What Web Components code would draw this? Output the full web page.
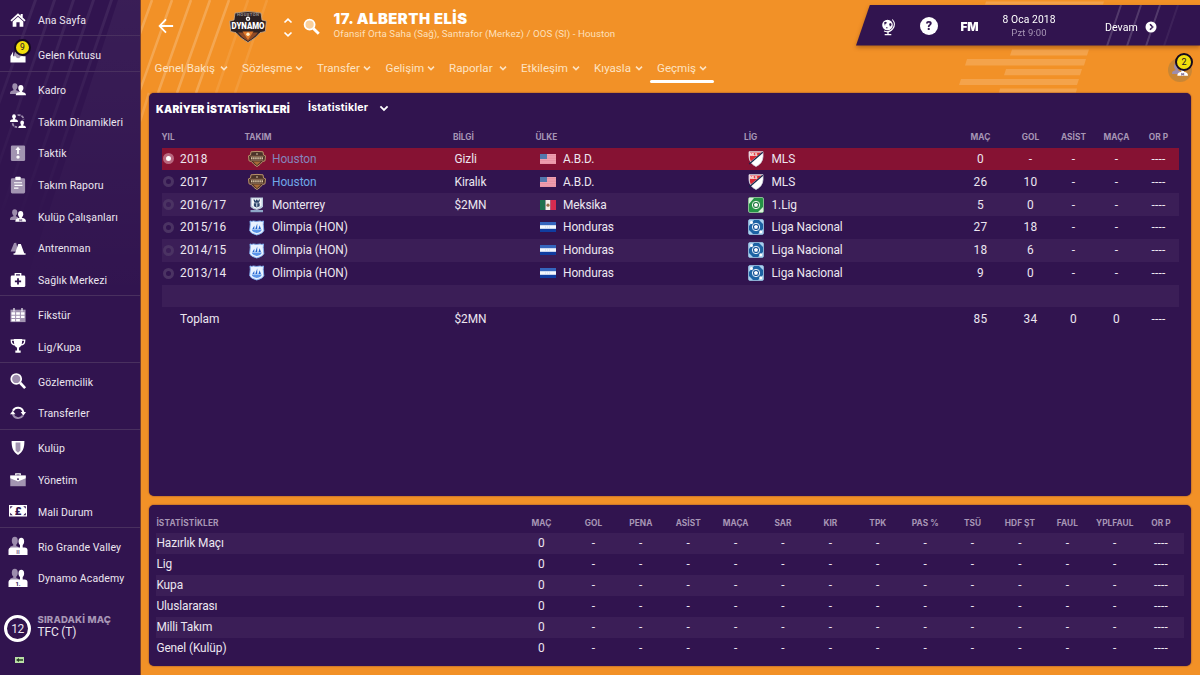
<!DOCTYPE html>
<html lang="tr">
<head>
<meta charset="utf-8">
<title>Alberth Elis - Kariyer İstatistikleri</title>
<style>
    html, body { margin: 0; padding: 0; width: 1200px; height: 675px; overflow: hidden; }
    body {
        --purple: #31144f;
        --stripe: #3b1e57;
        --orange: #f29127;
        --text: #ece6f0;
        --dim: #a796b5;
        font-family: Roboto, "Liberation Sans", sans-serif;
        font-size: 12px;
        color: var(--text);
    }
</style>
</head>
<body>
<fm-app>
    <fm-sidebar slot="sidebar"></fm-sidebar>
    <fm-player-header slot="header"></fm-player-header>
    <fm-panel slot="career" class="career"><career-table></career-table></fm-panel>
    <fm-panel slot="stats" class="stats"><stats-table></stats-table></fm-panel>
</fm-app>

<script>
// every icon is [viewBox width, viewBox height, markup]
const ICONS = {
    home: [18, 18, '<path d="M.5 9.200 9 1.300l3 2.800V2.200h2.300v4l3.200 3-1.300 1.400L9 4.200l-7.200 6.400z" fill="#fff"/><path d="M3 10.600 9 5.300l6 5.300v6h-4.200v-5H7.200v5H3z" fill="#fff"/>'],
    inbox: [18, 18, '<path d="M4 10 7 2h6l2 9-2 3H4z" fill="#a99cb6"/><path d="M1 9.500 3.500 5v5.500h3c.4 3 5 3 5.400 0H17.500V17.500H.5V10z" fill="#fff"/>'],
    people: [18, 18, '<g fill="#9d8dad"><ellipse cx="5.500" cy="5" rx="2.900" ry="3.500"/><path d="M0 13.500c0-2.800 1.200-3.600 3.900-4.100V7h3v2.400L10 10.500v3z"/></g><g fill="#fff"><ellipse cx="12.200" cy="6.800" rx="2.900" ry="3.500"/><path d="M6.500 15c0-2.500 1.300-3.200 4.200-3.700V9h3v2.300c2.900.5 4.300 1.200 4.300 3.700z"/></g>'],
    dynamics: [18, 18, '<g fill="#fff"><ellipse cx="4.500" cy="4" rx="2.100" ry="2.600"/><path d="M0 10c0-2.200 1-2.500 3.400-3V5h2.200v2c2.400.5 3.400.8 3.400 3z"/><ellipse cx="13.700" cy="11" rx="2.100" ry="2.600"/><path d="M9.300 17c0-2.200 1-2.500 3.300-3v-2h2.200v2c2.300.5 3.200.8 3.200 3z"/></g><path d="M8.500 2.500c3.800-.8 6.700 1.300 6.700 4.800M3 11.500c.2 2.700 2 4.300 5 4.300" fill="none" stroke="#9d8dad" stroke-width="2" stroke-dasharray="3.400 1"/>'],
    tactic: [18, 18, '<rect x="1" y=".5" width="16" height="17.500" rx="1.500" fill="#a294b1"/><path d="m9 2 3 3.500h-2V10H8V5.500H6z" fill="#fff"/><circle cx="9" cy="13.600" r="1.900" fill="#fff"/>'],
    report: [18, 18, '<rect x="1" y="1.500" width="16" height="17" rx="1.500" fill="#a294b1"/><rect x="6" y="-.2" width="6" height="3.600" rx=".8" fill="#fff"/><path d="M4.500 6.500h9M5 9.500h9M4.500 12.500h5" stroke="#fff" stroke-width="1.300"/>'],
    staff: [18, 18, '<g fill="#9d8dad"><ellipse cx="5.300" cy="5" rx="2.900" ry="3.500"/><path d="M0 13.500c0-2.700 1.200-3.600 3.900-4.100V7h2.800v2.300L9 10.500v3z"/></g><g fill="#fff"><ellipse cx="12" cy="7" rx="2.900" ry="3.500"/><path d="M6 15.500c0-2.900 1.500-3.900 4.600-4.400V9h2.800v2.100c3.100.5 4.600 1.500 4.600 4.400z"/></g><path d="m10.300 12 1.700 1 1.700-1v3.500l-1.700-1-1.700 1z" fill="#8c7a9f"/>'],
    training: [18, 18, '<path d="M.7 13 4.600 3.500l2.400-.5 2 10z" fill="#9d8dad"/><path d="M4 16.500V15h1.700L9.300 4.500h2.900L16 15h1.500v1.500z" fill="#fff"/>'],
    medical: [18, 18, '<path d="M6 4.500V1.800h6v2.700" fill="none" stroke="#fff" stroke-width="1.600"/><rect x=".8" y="4" width="16.400" height="13" rx="1.500" fill="#fff"/><path d="M9 7v7M5.500 10.500h7" stroke="#31144f" stroke-width="2"/>'],
    calendar: [18, 18, '<path d="M.5 3h17v14H.5z" fill="#a294b1"/><path d="M1.700 6h4v2.800h-4zm5.200 0h4.200v2.800H6.900zm5.400 0h4v2.800h-4zM1.700 9.800h4v2.700h-4zm5.200 0h4.200v2.700H6.900zm5.400 0h4v2.700h-4zM1.700 13.500h4V16h-4zm5.200 0h4.200V16H6.900z" fill="#fff"/><path d="M4.500 1v4M13.500 1v4" stroke="#fff" stroke-width="1.300"/>'],
    trophy: [18, 18, '<path d="M4.300 1h9.400c0 5.500-.8 8.700-3.600 9.700v3.300H12v2.700H6V14h1.900v-3.300C5.100 9.700 4.300 6.500 4.300 1z" fill="#fff"/><path d="M4.800 2.500H1.400c0 3.400 1.500 5.300 4.600 5.300M13.200 2.500h3.400c0 3.400-1.500 5.300-4.600 5.300" fill="none" stroke="#fff" stroke-width="1.400"/>'],
    search: [18, 18, '<circle cx="7" cy="6.700" r="5.600" fill="#9d8dad" stroke="#fff" stroke-width="1.900"/><path d="m11.300 11 5.700 6" stroke="#fff" stroke-width="3"/>'],
    transfer: [18, 18, '<path d="M3.300 6.500A6.300 6.300 0 0 1 15 8" fill="none" stroke="#fff" stroke-width="2.200"/><path d="m12 7.800 6 0-3 4.200z" fill="#fff"/><path d="M14.500 12A6.300 6.300 0 0 1 3.200 10" fill="none" stroke="#9d8dad" stroke-width="2.200"/><path d="M0 10.500 6.200 10.500 3.100 6.500z" fill="#fff"/>'],
    shield: [18, 18, '<path d="M1.800 1h14.400c0 8-1.700 12-7.200 15.800C3.500 13 1.800 9 1.800 1z" fill="#fff"/><path d="M6.300 2.700h5.400v9.200L9 14.300l-2.700-2.400z" fill="#a294b1"/>'],
    briefcase: [18, 18, '<path d="M6.500 4V2h5v2" fill="none" stroke="#fff" stroke-width="1.400"/><path d="M.3 4h17.400v12H.3z" fill="#a294b1"/><path d="M.3 4h17.400v3L9 10.700.3 7z" fill="#fff"/><circle cx="9" cy="8" r="1.100" fill="#31144f"/>'],
    money: [18, 18, '<rect x="0" y="3" width="18" height="11.500" fill="#fff"/><path d="M1.200 4.200h2.500L1.200 6.700zM16.800 4.200h-2.500l2.500 2.500zM1.200 13.300h2.500l-2.500-2.500zM16.800 13.300h-2.500l2.500-2.500z" fill="#31144f"/><text x="9" y="12.700" font-size="11" font-weight="900" text-anchor="middle" fill="#31144f">£</text>'],
    teamB: [20, 20, '<g fill="#9d8dad"><ellipse cx="6.800" cy="4.700" rx="3" ry="3.900"/><path d="M1.500 14c0-3.400 1.500-3.900 3.800-4.400V7h3v3l2.300 1v3z"/></g><g fill="#fff"><ellipse cx="13.300" cy="5.500" rx="2.800" ry="3.700"/><path d="M12 8h2.700v4H12z"/><path d="M.5 19v-4.500c0-2 1-2.900 3-2.900h13c2 0 3 .9 3 2.900V19z"/></g><text x="10" y="17.800" font-size="6" font-weight="700" text-anchor="middle" fill="#7a678d">II</text>'],
    teamC: [20, 20, '<g fill="#9d8dad"><ellipse cx="6.800" cy="4.700" rx="3" ry="3.900"/><path d="M1.500 14c0-3.400 1.500-3.900 3.800-4.400V7h3v3l2.300 1v3z"/></g><g fill="#fff"><ellipse cx="13.300" cy="5.500" rx="2.800" ry="3.700"/><path d="M12 8h2.700v4H12z"/><path d="M.5 19v-4.500c0-2 1-2.900 3-2.900h13c2 0 3 .9 3 2.900V19z"/></g><text x="10" y="17.800" font-size="6" font-weight="700" text-anchor="middle" fill="#31144f">1.</text>'],
    back: [18, 18, '<path d="M9 1.500 1.800 9 9 16.500M2 9h15" fill="none" stroke="#fff" stroke-width="2"/>'],
    chevron: [10, 10, '<path d="m2 3.600 3 3 3-3" fill="none" stroke="currentColor" stroke-width="1.500"/>'],
    chevronUp: [10, 10, '<path d="m1.500 6.500 3.500-3.300 3.500 3.300" fill="none" stroke="currentColor" stroke-width="1.700"/>'],
    lens: [18, 18, '<circle cx="7" cy="7" r="5.300" fill="#f9cf9b" stroke="#fff" stroke-width="1.900"/><path d="m11 11 5.700 5.700" stroke="#fff" stroke-width="3"/>'],
    globe: [16, 18, '<circle cx="7.500" cy="7" r="5.300" fill="#fff"/><path d="M12.300 1.500a7.300 7.300 0 0 1-8.300 11.600" fill="none" stroke="#fff" stroke-width="1.100"/><path d="M8 13.500v2.800M4.700 16.700h6.600" stroke="#fff" stroke-width="1.300"/><path d="m4 4.500 2-.8 1 1.200-1.700 1.200-.3 2zM9 5.800l2-.8.6 2-1.600 1.800zM6 9l1.600.3L7 11z" fill="#31144f"/>'],
    help: [18, 18, '<circle cx="9" cy="9" r="9" fill="#fff"/><text x="9" y="13.400" font-size="12.500" font-weight="900" text-anchor="middle" fill="#31144f">?</text>'],
    go: [12, 12, '<circle cx="6" cy="6" r="5.500" fill="#fff"/><path d="m5 3.200 2.700 2.800L5 8.800" fill="none" stroke="#31144f" stroke-width="1.600"/>'],
    houston: [38, 32, '<path d="M6 2Q19-1 32 2l1 7 4.300 1-1 10.500-5.300 1.200Q27 27 19 31.500 11 27 7 21.700L1.700 20.500.7 10 5 9z" fill="#2d2122" stroke="#c9ab8c" stroke-width=".8"/><path d="M9 21.500h20q-3.500 5-10 8.700Q12.500 26.500 9 21.500z" fill="#8f4a25"/><path d="M13.500 20.500h11L19 29z" fill="#e07a2c"/><circle cx="19" cy="23.300" r="1.700" fill="#fff0c8"/><circle cx="19" cy="7.800" r="2.200" fill="#fff"/><circle cx="19" cy="7.800" r=".9" fill="#2d2122"/><text x="19" y="5.300" font-size="4.200" font-weight="700" text-anchor="middle" textLength="22" fill="#9a8f8e">HOUSTON</text><text x="19" y="18.300" font-size="8.500" font-weight="900" text-anchor="middle" textLength="33" lengthAdjust="spacingAndGlyphs" fill="#fff">DYNAMO</text>'],
    houstonSmall: [18, 16, '<path d="M3 .8q6-.8 12 0l.5 3.200 2 .8-.5 5-2.500.8q-2 2.900-5.500 5-3.500-2.100-5.500-5l-2.500-.8-.5-5 2-.8z" fill="#4a3228" stroke="#b8926a" stroke-width="1"/><path d="M5 10.500h8L9 14.300z" fill="#a86b38"/><path d="M2.500 5.300h13M2.800 9.200h12.400" stroke="#a88764" stroke-width=".8"/><path d="M3 7.300h12" stroke="#d8c4a4" stroke-width="2" stroke-dasharray="1.500 .6"/><circle cx="9" cy="3" r="1" fill="#a8957c"/>'],
    monterrey: [14, 16, '<path d="M.5.500h13v9q-1 2.500-6.500 4-5.500-1.500-6.500-4z" fill="#b9c9dc"/><path d="M2 1.500h10v7Q11 11 7 12.300 3 11 2 8.500z" fill="#f5f8fa"/><path d="M3.500 2.500h1.300l.8 2 .9-2h1l.9 2 .8-2h1.300L9.300 6H4.700zM4 6.500h6v3.200L7 11 4 9.700z" fill="#2a4268"/><path d="M6.400 6.500h1.200v3.700H6.400z" fill="#cdd9e6"/><path d="M.5 13.500h13v2.300H.5z" fill="#8ea7c7"/>'],
    olimpia: [16, 16, '<path d="M1 1q2 1 3.500 0 3.500 1 7 0Q13 2 15 1l-.3 3.500.6 6.500q-1 3-7.300 4.500Q1.700 14 .7 11l.6-6.500z" fill="#e9f2ff" stroke="#7fb0f2" stroke-width=".9"/><path d="M2.800 9.700h10.400q-.5 2.800-5.200 3.600-4.700-.8-5.200-3.600z" fill="#5b95ea"/><path d="M3.500 9.300 5.500 6v3.300zM6.500 9.300 8.500 3.500v5.800zM9.700 9.300 11 5.500l1.300 3.800z" fill="#2364cd"/>'],
    usa: [16, 10, '<path d="M0 0h16v10H0z" fill="#ef9fb0"/><path d="M0 1.700h16M0 4.200h16M0 6.700h16M0 9.200h16" stroke="#e48a9d" stroke-width=".8"/><path d="M0 0h7v5H0z" fill="#5377ac"/>'],
    mexico: [16, 10, '<path d="M0 0h5.500v10H0z" fill="#1d7350"/><path d="M5.500 0h5v10h-5z" fill="#f3efe9"/><path d="M10.500 0H16v10h-5.500z" fill="#d62b50"/><circle cx="8" cy="5.200" r="1.600" fill="#967147"/>'],
    honduras: [16, 10, '<path d="M0 0h16v10H0z" fill="#f4f7fd"/><path d="M0 0h16v3.200H0z" fill="#3565bd"/><path d="M0 6.800h16V10H0z" fill="#103da0"/><path d="M5 5h6" stroke="#c3d3ee" stroke-width=".8" stroke-dasharray="1 1"/>'],
    mls: [16, 16, '<path d="M1 .7h14v5q-.4 6.700-7 9.800Q1.400 12.400 1 5.700z" fill="#fff" stroke="#d9dce4" stroke-width=".8"/><path d="M1.800 1.500h12L2.700 10.500q-.9-2.500-.9-4.800z" fill="#d92a36"/><path d="m1.200 13 13.600-11.700" stroke="#17254a" stroke-width="1.300"/><text x="5.600" y="5.300" font-size="3.800" font-weight="900" text-anchor="middle" fill="#fff">MLS</text>'],
    ligMx: [16, 16, '<rect x=".5" y=".5" width="15" height="15" rx="1.500" fill="#249345" stroke="#9fd2a4" stroke-width=".8"/><path d="M1 1h5L1 7zM15 15h-5l5-5z" fill="#dcefdc"/><circle cx="8" cy="8" r="3.700" fill="#237d45" stroke="#e8f6e8" stroke-width="1"/><path d="m8 5.800 2 1.500-.7 2.400H6.700L6 7.300z" fill="#fff"/>'],
    ligHn: [16, 16, '<rect x=".5" y=".5" width="15" height="15" rx="1.500" fill="#1d63a4" stroke="#a6cbe8" stroke-width=".8"/><path d="M1 1h5L1 7zM15 15h-5l5-5zM11 1l4 4V1zM1 11l4 4H1z" fill="#a9cfee"/><circle cx="3.500" cy="3.500" r="1.500" fill="#fff"/><circle cx="12.700" cy="12.700" r="1.500" fill="#fff"/><circle cx="8" cy="8" r="3.700" fill="#1c5598" stroke="#e2f0fb" stroke-width="1"/><path d="m8 5.800 2 1.500-.7 2.400H6.700L6 7.300z" fill="#fff"/>']
};

class FmIcon extends HTMLElement {
    constructor() {
        super();
        this.attachShadow({ mode: 'open' });
    }

    connectedCallback() {
        const [w, h, body] = ICONS[this.getAttribute('name')];
        const width = this.getAttribute('width') || w;
        this.shadowRoot.innerHTML = `
            <style>
                :host { display: block; flex: none; width: ${width}px; height: ${width * h / w}px; }
                svg { display: block; width: 100%; height: 100%; overflow: visible; }
                text { font-family: Roboto, sans-serif; letter-spacing: 0; }
            </style>
            <svg viewBox="0 0 ${w} ${h}">${body}</svg>
        `;
    }
}


class FmApp extends HTMLElement {
    constructor() {
        super();
        this.attachShadow({ mode: 'open' });
        this.shadowRoot.innerHTML = `
            <style>
                :host { display: grid; grid-template-columns: 141px 1fr; width: 1200px; height: 675px; background: var(--orange); }
                main { display: flex; flex-direction: column; padding: 0 9px 0 8px; position: relative; box-sizing: border-box; height: 675px; }
                .lines { position: absolute; left: 0; top: 0; width: 1059px; height: 100%; }
                ::slotted(*) { position: relative; }
                ::slotted(.career) { height: 402.500px; margin-bottom: 9px; }
                ::slotted(.stats) { height: 161.500px; }
            </style>
            <slot name="sidebar"></slot>
            <main>
                <svg class="lines" viewBox="0 0 1059 675">
                    <g stroke="#fff" stroke-width="2.500" opacity=".2">
                        <path d="M11 0-4 42M31 0-2 93M50 0 17 93M69 0 36 93M88 0 55 93"/>
                        <path d="M107 0 75 93M126 0 94 93" opacity=".45"/>
                        <path d="M8 93-10 150" opacity=".7"/>
                    </g>
                    <g fill="#fff" opacity=".17">
                        <path d="M845 1.500h118l-1 3H844zM871 49.500h77l-2 6H869zM826 59h119l-2 6.500H824zM865 69h76l-2 6.200H863zM820 79h118l-2 6H818zM859 88.500h77l-1 4H858z"/>
                    </g>
                </svg>
                <slot name="header"></slot>
                <slot name="career"></slot>
                <slot name="stats"></slot>
            </main>
        `;
    }
}


class FmNavItem extends HTMLElement {
    constructor() {
        super();
        this.attachShadow({ mode: 'open' });
    }

    connectedCallback() {
        const badge = this.getAttribute('badge');
        const icon = this.getAttribute('icon');
        this.shadowRoot.innerHTML = `
            <style>
                :host { display: grid; grid-template-columns: 35px 1fr; column-gap: 3px; align-items: center; height: 31.650px; position: relative; }
                .icon { display: flex; justify-content: center; }
                .label { font-size: 10.500px; letter-spacing: .1px; white-space: nowrap; margin-top: 1.500px; }
                .badge { position: absolute; left: 14px; top: .5px; width: 13px; height: 13px; border: 2px solid #15091f; border-radius: 50%; background: #f2de0c; color: #241327; font-size: 8.500px; line-height: 13px; text-align: center; }
            </style>
            <span class="icon"><fm-icon name="${icon}" width="${icon.startsWith('team') ? 20 : icon === 'money' ? 18 : 16}"></fm-icon></span>
            <span class="label"><slot></slot></span>
            ${badge ? `<span class="badge">${badge}</span>` : ''}
        `;
    }
}


class FmSidebar extends HTMLElement {
    constructor() {
        super();
        this.attachShadow({ mode: 'open' });
        this.shadowRoot.innerHTML = `
            <style>
                :host { display: block; position: relative; height: 675px; background: var(--purple); box-sizing: border-box; border-right: 1px solid #77402f; overflow: hidden; }
                .lines { position: absolute; left: 0; top: 0; width: 140px; height: 300px; }
                nav { position: relative; }
                .group { padding-top: 2.450px; border-top: 1px solid #49305f; }
                .group:first-child { padding-top: 3.800px; border-top: 0; }
                .next { position: relative; display: grid; grid-template-columns: 27px 1fr; column-gap: 6.500px; align-items: center; padding: 0 0 0 4px; margin-top: 20.500px; height: 28px; }
                .ring { width: 21px; height: 21px; border: 3px solid #fff; border-radius: 50%; line-height: 22px; text-align: center; font-size: 12px; letter-spacing: -.4px; }
                .next b { display: block; font: 800 9.600px/13px Inter, sans-serif; color: var(--dim); letter-spacing: .15px; margin-top: -4px; }
                .next span { display: block; font-size: 12px; line-height: 13px; letter-spacing: -.2px; }
                .sub { display: block; position: relative; margin: 15px 0 0 15px; width: 9px; height: 6px; }
            </style>
            <svg class="lines" viewBox="0 0 140 300">
                <defs><linearGradient id="fade" x2="0" y2="1"><stop offset="0" stop-color="#fff" stop-opacity=".07"/><stop offset="1" stop-color="#fff" stop-opacity="0"/></linearGradient></defs>
                <path d="M118 0h22v300H20z" fill="url(#fade)" opacity=".6"/>
                <path d="M34 0h3L-2 110v-8zM53 0h3L0 165v-8zM72 0h3L4 210H1zM92 0h3L20 220h-3zM110 0h3L36 226h-3z" fill="url(#fade)"/>
            </svg>
            <nav>
                <div class="group"><fm-nav-item icon="home">Ana Sayfa</fm-nav-item></div>
                <div class="group"><fm-nav-item icon="inbox" badge="9">Gelen Kutusu</fm-nav-item></div>
                <div class="group">
                    <fm-nav-item icon="people">Kadro</fm-nav-item>
                    <fm-nav-item icon="dynamics">Takım Dinamikleri</fm-nav-item>
                    <fm-nav-item icon="tactic">Taktik</fm-nav-item>
                    <fm-nav-item icon="report">Takım Raporu</fm-nav-item>
                    <fm-nav-item icon="staff">Kulüp Çalışanları</fm-nav-item>
                    <fm-nav-item icon="training">Antrenman</fm-nav-item>
                    <fm-nav-item icon="medical">Sağlık Merkezi</fm-nav-item>
                </div>
                <div class="group">
                    <fm-nav-item icon="calendar">Fikstür</fm-nav-item>
                    <fm-nav-item icon="trophy">Lig/Kupa</fm-nav-item>
                </div>
                <div class="group">
                    <fm-nav-item icon="search">Gözlemcilik</fm-nav-item>
                    <fm-nav-item icon="transfer">Transferler</fm-nav-item>
                </div>
                <div class="group">
                    <fm-nav-item icon="shield">Kulüp</fm-nav-item>
                    <fm-nav-item icon="briefcase">Yönetim</fm-nav-item>
                    <fm-nav-item icon="money">Mali Durum</fm-nav-item>
                </div>
                <div class="group">
                    <fm-nav-item icon="teamB">Rio Grande Valley</fm-nav-item>
                    <fm-nav-item icon="teamC">Dynamo Academy</fm-nav-item>
                </div>
            </nav>
            <div class="next">
                <div class="ring">12</div>
                <div><b>SIRADAKİ MAÇ</b><span>TFC (T)</span></div>
            </div>
            <svg class="sub" viewBox="0 0 9 6"><path d="M0 0h9v6H0z" fill="#b9dfa5"/><path d="M1 3 4 1v1.300h4v1.400H4V5z" fill="#243c22"/></svg>
        `;
    }
}


class FmPlayerHeader extends HTMLElement {
    constructor() {
        super();
        this.attachShadow({ mode: 'open' });

        // label and distance to the start of the next tab
        const tabs = [
            ['Genel Bakış', 87.5], ['Sözleşme', 75], ['Transfer', 68.5], ['Gelişim', 63.5],
            ['Raporlar', 72], ['Etkileşim', 73], ['Kıyasla', 63], ['Geçmiş', 64]
        ];

        this.shadowRoot.innerHTML = `
            <style>
                :host { display: block; height: 93px; color: #fff; }
                .top { display: flex; height: 52px; align-items: center; box-sizing: border-box; padding-left: 9px; }
                .crest { margin: 2px 0 0 54.500px; }
                .steps { display: flex; flex-direction: column; gap: 3px; margin: 2px 0 0 16.500px; }
                .lens { margin: 0 0 0 9.500px; }
                .name { margin: 0 0 0 14px; white-space: nowrap; }
                h1 { margin: 0; font: 900 14.800px/16px Inter, sans-serif; letter-spacing: .5px; }
                p { margin: 0; font-size: 9.700px; line-height: 14px; letter-spacing: .08px; color: #fde0bd; }
                .tabs { display: flex; height: 31px; padding-left: 5.500px; }
                .tab { display: flex; align-items: center; justify-content: space-between; box-sizing: border-box; padding: 0 13.500px 2px 0; height: 33px; color: #fde3c3; font-size: 11.600px; letter-spacing: 0; position: relative; white-space: nowrap; }
                .tab.active::after { content: ''; position: absolute; left: -7px; bottom: 2px; width: 64px; height: 3px; border-radius: 1.500px; background: #fff; }
                .bar { position: absolute; right: -9px; top: 4.500px; width: 344px; height: 41px; filter: drop-shadow(0 2px 2px rgba(80, 30, 0, .4)); }
                .shape { display: flex; align-items: center; height: 100%; background: var(--purple); clip-path: polygon(14px 0, 100% 0, 100% 100%, 0 100%); position: relative; }
                .shape svg { position: absolute; left: 244px; top: 0; width: 100px; height: 41px; }
                .globe { margin: 3px 0 0 24px; }
                .help { margin: 2px 0 0 23.500px; }
                .fm { font: 900 11.800px/14px Inter, sans-serif; letter-spacing: -.2px; margin: 4px 0 0 23px; width: 20px; }
                .date { width: 96px; text-align: center; font-size: 10.300px; line-height: 12.500px; letter-spacing: .1px; margin: 3px 0 0 .5px; }
                .date span { display: block; color: #a796b5; font-size: 9.500px; letter-spacing: .1px; }
                .go { display: flex; gap: 7px; align-items: center; margin: 4px 0 0 28px; font-size: 10.600px; letter-spacing: .05px; }
                .alert { position: absolute; right: -1px; top: 58px; width: 24px; height: 24px; border-radius: 50%; background: #c98635; display: flex; align-items: center; justify-content: center; }
                .alert b { position: absolute; left: 7px; top: -5px; width: 14px; height: 14px; border: 2px solid #15091f; border-radius: 50%; background: #f2de0c; color: #241327; font: 9px/14px Roboto, sans-serif; text-align: center; }
            </style>
            <div class="top">
                <fm-icon name="back" width="16"></fm-icon>
                <fm-icon class="crest" name="houston" width="38"></fm-icon>
                <div class="steps"><fm-icon name="chevronUp"></fm-icon><fm-icon name="chevronUp" style="transform: rotate(180deg)"></fm-icon></div>
                <fm-icon class="lens" name="lens" width="17"></fm-icon>
                <div class="name">
                    <h1>17. ALBERTH ELİS</h1>
                    <p>Ofansif Orta Saha (Sağ), Santrafor (Merkez) / OOS (SI) - Houston</p>
                </div>
            </div>
            <div class="tabs">
                ${tabs.map(([label, width], i) => `
                    <div class="tab ${i === tabs.length - 1 ? 'active' : ''}" style="width: ${width}px">${label}<fm-icon name="chevron" width="10"></fm-icon></div>
                `).join('')}
            </div>
            <div class="bar"><div class="shape">
                <svg viewBox="0 0 100 41"><path d="m21 0-14 41M41 0 27 41M60 0 46 41" stroke="#fff" stroke-width="2" opacity=".16"/><path d="M78 0 64 41" stroke="#fff" stroke-width="2" opacity=".06"/></svg>
                <fm-icon class="globe" name="globe" width="16"></fm-icon>
                <fm-icon class="help" name="help" width="18"></fm-icon>
                <div class="fm">FM</div>
                <div class="date">8 Oca 2018<span>Pzt 9:00</span></div>
                <div class="go">Devam<fm-icon name="go" width="12"></fm-icon></div>
            </div></div>
            <div class="alert"><fm-icon name="staff" width="16"></fm-icon><b>2</b></div>
        `;
    }
}


class FmPanel extends HTMLElement {
    constructor() {
        super();
        this.attachShadow({ mode: 'open' });
        this.shadowRoot.innerHTML = `
            <style>
                :host { display: block; flex: none; background: var(--purple); border-radius: 5px; box-shadow: 0 0 1.500px #4a2030; }
            </style>
            <slot></slot>
        `;
    }
}


class CareerTable extends HTMLElement {
    constructor() {
        super();
        this.attachShadow({ mode: 'open' });

        const hn = ['honduras', 'Honduras', 'ligHn', 'Liga Nacional'];
        const rows = [
            ['2018', 'houstonSmall', 'Houston', 'Gizli', 'usa', 'A.B.D.', 'mls', 'MLS', '0', '-'],
            ['2017', 'houstonSmall', 'Houston', 'Kiralık', 'usa', 'A.B.D.', 'mls', 'MLS', '26', '10'],
            ['2016/17', 'monterrey', 'Monterrey', '$2MN', 'mexico', 'Meksika', 'ligMx', '1.Lig', '5', '0'],
            ['2015/16', 'olimpia', 'Olimpia (HON)', '', ...hn, '27', '18'],
            ['2014/15', 'olimpia', 'Olimpia (HON)', '', ...hn, '18', '6'],
            ['2013/14', 'olimpia', 'Olimpia (HON)', '', ...hn, '9', '0']
        ];
        const iconWidth = { houstonSmall: 18, monterrey: 13.5, olimpia: 15.5 };

        this.shadowRoot.innerHTML = `
            <style>
                :host { display: block; padding: 0 12px 0 12.500px; }
                .title { display: flex; align-items: center; height: 30px; margin-left: -5.500px; color: #fff; }
                h2 { margin: 2px 0 0; width: 152px; font: 900 10.300px/14px Inter, sans-serif; letter-spacing: .22px; white-space: nowrap; }
                .title span { font: 700 10.500px/14px Inter, sans-serif; letter-spacing: .2px; width: 70px; }
                .row { display: grid; grid-template-columns: 83px 208.500px 82.500px 208.500px 208px 57px 43px 43px 43px 1fr; align-items: center; height: 22.850px; font-size: 11.900px; letter-spacing: -.08px; }
                .row > * { white-space: nowrap; }
                .row > :nth-child(n+6) { text-align: center; letter-spacing: .2px; }
                .row > .year { letter-spacing: .2px; }
                .row > .total { letter-spacing: -.08px; }
                .head { height: 24.500px; font: 700 8.300px/12px Inter, sans-serif; letter-spacing: 0; color: var(--dim); }
                .head > * { margin-top: 4px; }
                .head > :nth-child(n+6) { letter-spacing: .05px; }
                .odd { background: var(--stripe); }
                .current { background: #861233; }
                .year, .cell { display: flex; align-items: center; }
                .radio { width: 5px; height: 5px; border: 3px solid #4b3363; border-radius: 50%; margin: 0 6px 0 1.500px; }
                .current .radio { background: #fff; border-color: #b9687f; }
                .year.total { padding-left: 18.500px; }
                .pic { width: 24px; display: flex; justify-content: center; margin-right: 3.500px; }
                .link { color: #6fa8e8; }
                .current .link { color: #8485bd; }
                .info { padding-left: 1.500px; }
            </style>
            <div class="title"><h2>KARİYER İSTATİSTİKLERİ</h2><span>İstatistikler</span><fm-icon name="chevron" width="12"></fm-icon></div>
            <div class="row head">
                <span>YIL</span><span>TAKIM</span><span>BİLGİ</span><span>ÜLKE</span><span>LİG</span>
                <span>MAÇ</span><span>GOL</span><span>ASİST</span><span>MAÇA</span><span>OR P</span>
            </div>
            ${rows.map(([year, crest, team, info, flag, country, logo, league, games, goals], i) => `
                <div class="row ${i === 0 ? 'current' : i % 2 === 0 ? 'odd' : ''}">
                    <div class="year"><i class="radio"></i>${year}</div>
                    <div class="cell"><span class="pic"><fm-icon name="${crest}" width="${iconWidth[crest]}"></fm-icon></span><span class="${team === 'Houston' ? 'link' : ''}">${team}</span></div>
                    <span class="info">${info}</span>
                    <div class="cell"><span class="pic"><fm-icon name="${flag}"></fm-icon></span>${country}</div>
                    <div class="cell"><span class="pic"><fm-icon name="${logo}"></fm-icon></span>${league}</div>
                    <span>${games}</span><span>${goals}</span><span>-</span><span>-</span><span>----</span>
                </div>
            `).join('')}
            <div class="row odd"></div>
            <div class="row">
                <div class="year total">Toplam</div><span></span><span class="info">$2MN</span><span></span><span></span>
                <span>85</span><span>34</span><span>0</span><span>0</span><span>----</span>
            </div>
        `;
    }
}


class StatsTable extends HTMLElement {
    constructor() {
        super();
        this.attachShadow({ mode: 'open' });

        const heads = ['MAÇ', 'GOL', 'PENA', 'ASİST', 'MAÇA', 'SAR', 'KIR', 'TPK', 'PAS %', 'TSÜ', 'HDF ŞT', 'FAUL', 'YPLFAUL', 'OR P'];
        const rows = ['Hazırlık Maçı', 'Lig', 'Kupa', 'Uluslararası', 'Milli Takım', 'Genel (Kulüp)'];

        this.shadowRoot.innerHTML = `
            <style>
                :host { display: block; padding: 8px 7.500px 0 7px; }
                .row { display: grid; grid-template-columns: 357.200px 56.600px repeat(12, 47.400px) 1fr; align-items: center; height: 21px; font-size: 11.900px; letter-spacing: .2px; }
                .row > * { white-space: nowrap; text-align: center; }
                .row > :first-child { text-align: left; letter-spacing: -.1px; padding-left: .4px; }
                .row:nth-of-type(even) { background: var(--stripe); }
                .head { height: 20px; font: 700 8.300px/12px Inter, sans-serif; letter-spacing: .05px; color: var(--dim); }
                .head > :first-child { letter-spacing: .15px; }
            </style>
            <div class="row head"><span>İSTATİSTİKLER</span>${heads.map(h => `<span>${h}</span>`).join('')}</div>
            ${rows.map(name => `
                <div class="row"><span>${name}</span>${heads.map((h, i) => `<span>${i === 0 ? '0' : i === 13 ? '----' : '-'}</span>`).join('')}</div>
            `).join('')}
        `;
    }
}

customElements.define('fm-icon', FmIcon);
customElements.define('fm-nav-item', FmNavItem);
customElements.define('fm-sidebar', FmSidebar);
customElements.define('fm-player-header', FmPlayerHeader);
customElements.define('fm-panel', FmPanel);
customElements.define('career-table', CareerTable);
customElements.define('stats-table', StatsTable);
customElements.define('fm-app', FmApp);
</script>
</body>
</html>
